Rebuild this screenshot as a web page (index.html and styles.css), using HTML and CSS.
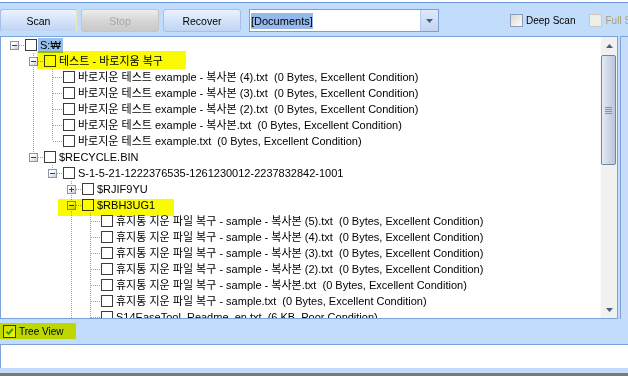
FILE: index.html
```html
<!DOCTYPE html>
<html lang="ko">
<head>
  <meta charset="UTF-8">
  <title>File Recovery</title>
  <link rel="stylesheet" href="styles.css">
</head>
<body>
<div class="app">
  <div class="topline"></div>

  <!-- Toolbar -->
  <div class="toolbar">
    <button class="btn scan">Scan</button>
    <button class="btn" disabled>Stop</button>
    <button class="btn recover">Recover</button>
    <div class="combo">
      <span class="combo-text"><span class="combo-sel">[Documents]</span></span>
      <span class="combo-arrow"><svg width="7" height="4" viewBox="0 0 7 4"><polygon points="0,0 7,0 3.5,4" fill="#4d5d83"/></svg></span>
    </div>
    <label class="chk deep"><span class="box13"></span>Deep Scan</label>
    <label class="chk full"><span class="box13"></span>Full Scan</label>
  </div>

  <div class="main">
    <div class="tree-panel">
      <div class="tree">
        <div class="row"><i class="g x"><b class="box"></b></i><span class="cb"></span><span class="lbl sel">S:₩</span></div>
        <div class="row"><i class="g"></i><i class="g x up dn"><b class="box"></b></i><span class="cb"></span><span class="lbl"><span class="ko">테스트</span> - <span class="ko">바로지움 복구</span></span><span class="hl hl-1"></span></div>
        <div class="row"><i class="g"></i><i class="g v"></i><i class="g t"></i><span class="cb"></span><span class="lbl"><span class="ko">바로지운 테스트</span> example - <span class="ko">복사본</span> (4).txt  (0 Bytes, Excellent Condition)</span></div>
        <div class="row"><i class="g"></i><i class="g v"></i><i class="g t"></i><span class="cb"></span><span class="lbl"><span class="ko">바로지운 테스트</span> example - <span class="ko">복사본</span> (3).txt  (0 Bytes, Excellent Condition)</span></div>
        <div class="row"><i class="g"></i><i class="g v"></i><i class="g t"></i><span class="cb"></span><span class="lbl"><span class="ko">바로지운 테스트</span> example - <span class="ko">복사본</span> (2).txt  (0 Bytes, Excellent Condition)</span></div>
        <div class="row"><i class="g"></i><i class="g v"></i><i class="g t"></i><span class="cb"></span><span class="lbl"><span class="ko">바로지운 테스트</span> example - <span class="ko">복사본</span>.txt  (0 Bytes, Excellent Condition)</span></div>
        <div class="row"><i class="g"></i><i class="g v"></i><i class="g l"></i><span class="cb"></span><span class="lbl"><span class="ko">바로지운 테스트</span> example.txt  (0 Bytes, Excellent Condition)</span></div>
        <div class="row"><i class="g"></i><i class="g x up"><b class="box"></b></i><span class="cb"></span><span class="lbl">$RECYCLE.BIN</span></div>
        <div class="row"><i class="g"></i><i class="g"></i><i class="g x up"><b class="box"></b></i><span class="cb"></span><span class="lbl">S-1-5-21-1222376535-1261230012-2237832842-1001</span></div>
        <div class="row"><i class="g"></i><i class="g"></i><i class="g"></i><i class="g x up dn"><b class="box plus"></b></i><span class="cb"></span><span class="lbl">$RJIF9YU</span></div>
        <div class="row"><i class="g"></i><i class="g"></i><i class="g"></i><i class="g x up dn"><b class="box"></b></i><span class="cb"></span><span class="lbl">$RBH3UG1</span><span class="hl hl-2"></span></div>
        <div class="row"><i class="g"></i><i class="g"></i><i class="g"></i><i class="g v"></i><i class="g t"></i><span class="cb"></span><span class="lbl"><span class="ko">휴지통 지운 파일 복구</span> - sample - <span class="ko">복사본</span> (5).txt  (0 Bytes, Excellent Condition)</span></div>
        <div class="row"><i class="g"></i><i class="g"></i><i class="g"></i><i class="g v"></i><i class="g t"></i><span class="cb"></span><span class="lbl"><span class="ko">휴지통 지운 파일 복구</span> - sample - <span class="ko">복사본</span> (4).txt  (0 Bytes, Excellent Condition)</span></div>
        <div class="row"><i class="g"></i><i class="g"></i><i class="g"></i><i class="g v"></i><i class="g t"></i><span class="cb"></span><span class="lbl"><span class="ko">휴지통 지운 파일 복구</span> - sample - <span class="ko">복사본</span> (3).txt  (0 Bytes, Excellent Condition)</span></div>
        <div class="row"><i class="g"></i><i class="g"></i><i class="g"></i><i class="g v"></i><i class="g t"></i><span class="cb"></span><span class="lbl"><span class="ko">휴지통 지운 파일 복구</span> - sample - <span class="ko">복사본</span> (2).txt  (0 Bytes, Excellent Condition)</span></div>
        <div class="row"><i class="g"></i><i class="g"></i><i class="g"></i><i class="g v"></i><i class="g t"></i><span class="cb"></span><span class="lbl"><span class="ko">휴지통 지운 파일 복구</span> - sample - <span class="ko">복사본</span>.txt  (0 Bytes, Excellent Condition)</span></div>
        <div class="row"><i class="g"></i><i class="g"></i><i class="g"></i><i class="g v"></i><i class="g t"></i><span class="cb"></span><span class="lbl"><span class="ko">휴지통 지운 파일 복구</span> - sample.txt  (0 Bytes, Excellent Condition)</span></div>
        <div class="row"><i class="g"></i><i class="g"></i><i class="g"></i><i class="g v"></i><i class="g t"></i><span class="cb"></span><span class="lbl">S14EaseTool_Readme_en.txt  (6 KB, Poor Condition)</span></div>
      </div>
      <div class="vscroll">
        <div class="sb-btn"><svg width="7" height="4" viewBox="0 0 7 4"><polygon points="0,4 3.5,0 7,4" fill="#4d5d83"/></svg></div>
        <div class="sb-track">
          <div class="sb-thumb"><span></span><span></span><span></span><span></span></div>
        </div>
        <div class="sb-btn"><svg width="7" height="4" viewBox="0 0 7 4"><polygon points="0,0 7,0 3.5,4" fill="#4d5d83"/></svg></div>
      </div>
    </div>
    <div class="side"></div>
  </div>

  <div class="options">
    <label class="chk tv"><span class="box13 on"><svg width="11" height="11" viewBox="0 0 11 11"><path d="M2.5 5.5 L4.5 7.8 L8.8 2.8" fill="none" stroke="#21a121" stroke-width="1.8"/></svg></span>Tree View</label>
    <span class="hl hl-tv"></span>
  </div>

  <div class="status"></div>
  <div class="bottom"></div>
</div>
</body>
</html>
```

FILE: styles.css
```css
body {
  margin: 0;
  width: 628px;
  height: 376px;
  overflow: hidden;
  background: #c2dcfc;
  font-family: "Liberation Sans", "Noto Sans CJK KR", sans-serif;
}

.app {
  display: flex;
  flex-direction: column;
  height: 376px;
}

.topline {
  height: 2px;
  background: #fff;
  border-bottom: 1px solid #6a98dc;
  flex: none;
}

/* Toolbar */
.toolbar {
  height: 33px;
  box-sizing: border-box;
  padding-top: 2px;
  display: flex;
  align-items: center;
  white-space: nowrap;
  overflow: hidden;
  flex: none;
}

.btn {
  width: 78px;
  height: 23px;
  margin-right: 4px;
  padding: 0;
  font: 10.5px "Liberation Sans", sans-serif;
  color: #000;
  border: 1px solid #a5bfe5;
  border-radius: 3px;
  background: linear-gradient(#ebf2fd, #d4e3f9 50%, #bfd5f4);
  flex: none;
}

.btn.scan {
  width: 77px;
  border-right-color: #efe6b4;
  border-bottom-color: #e8dca8;
}

.btn.recover {
  margin-right: 8px;
}

.btn:disabled {
  color: #a8a8a8;
  border-color: #c6c6c6;
  background: linear-gradient(#ededed, #d6d6d6 50%, #c9c9c9);
}

.combo {
  width: 190px;
  height: 23px;
  box-sizing: border-box;
  border: 1px solid #7f9fd4;
  background: #fff;
  display: flex;
  flex: none;
}

.combo-text {
  flex: 1;
  padding-left: 1px;
  display: flex;
  align-items: center;
  font-size: 11px;
}

.combo-sel {
  background: #95b9ec;
  padding: 1px 0;
  line-height: 14px;
}

.combo-arrow {
  width: 17px;
  border-left: 1px solid #b5c8ea;
  background: linear-gradient(#dfe9f9, #c2d5f3);
  display: flex;
  align-items: center;
  justify-content: center;
}

.chk {
  display: flex;
  align-items: center;
  gap: 3px;
  font-size: 10px;
  flex: none;
}

.chk.deep { margin-left: 71px; }

.chk.full {
  margin-left: 14px;
  color: #a89e7c;
}

.box13 {
  width: 13px;
  height: 13px;
  box-sizing: border-box;
  border: 1px solid #8e9cb5;
  background: linear-gradient(135deg, #d9d9d3, #fbfbfa);
  display: flex;
  align-items: center;
  justify-content: center;
}

.full .box13 {
  border-color: #c9c9c2;
  background: #efefea;
}

.box13.on {
  border-color: #1c5180;
}

/* Tree */
.main {
  display: flex;
  height: 283px;
  flex: none;
}

.tree-panel {
  width: 618px;
  box-sizing: border-box;
  border: 1px solid #7ea2dc;
  background: #fff;
  display: flex;
  overflow: hidden;
  flex: none;
}

.tree {
  flex: 1;
  padding-left: 4px;
  overflow: hidden;
}

.row {
  display: flex;
  align-items: center;
  height: 16px;
  position: relative;
  white-space: nowrap;
}

.g {
  display: block;
  width: 19px;
  height: 16px;
  position: relative;
  flex: none;
}

.v::before, .t::before, .l::before, .up::before {
  content: "";
  position: absolute;
  left: 9px;
  top: 0;
  width: 1px;
  height: 16px;
  background: linear-gradient(#a0a0a0 50%, transparent 50%) 0 0 / 1px 2px;
}

.l::before, .up::before { height: 8px; }
.up.dn::before { height: 16px; }

.t::after, .l::after, .x::after {
  content: "";
  position: absolute;
  left: 10px;
  top: 8px;
  width: 9px;
  height: 1px;
  background: linear-gradient(90deg, #a0a0a0 50%, transparent 50%) 0 0 / 2px 1px;
}

.x::after {
  left: 14px;
  width: 5px;
}

.box {
  position: absolute;
  left: 5px;
  top: 4px;
  width: 9px;
  height: 9px;
  box-sizing: border-box;
  border: 1px solid #8a96ab;
  background: linear-gradient(135deg, #fff 30%, #c4cbd8);
}

.box::before {
  content: "";
  position: absolute;
  left: 1px;
  top: 3px;
  width: 5px;
  height: 1px;
  background: #1c3f8c;
}

.box.plus::after {
  content: "";
  position: absolute;
  left: 3px;
  top: 1px;
  width: 1px;
  height: 5px;
  background: #1c3f8c;
}

.cb {
  width: 12px;
  height: 12px;
  box-sizing: border-box;
  border: 1px solid #3c3c3c;
  background: #fff;
  margin-left: 1px;
  flex: none;
}

.lbl {
  margin-left: 1px;
  padding: 0 2px;
  font-size: 11px;
  line-height: 15px;
  white-space: pre;
  color: #000;
}

.ko {
  font-family: "Noto Sans CJK KR", sans-serif;
  font-size: 11px;
}

.sel { background: #98c0ec; }

/* marker highlights drawn over the screenshot */
.hl {
  position: absolute;
  background: #fafa00;
  mix-blend-mode: multiply;
  pointer-events: none;
}

.hl-1 { left: 32px; top: -2px; width: 149px; height: 18px; }
.hl-2 { left: 53px; top: 2px; width: 116px; height: 17px; }
.hl-tv { left: 0; top: 4px; width: 76px; height: 16px; }

/* Scrollbar */
.vscroll {
  width: 17px;
  flex: none;
  display: flex;
  flex-direction: column;
  background: #f1f1ef;
  border-left: 1px solid #fafafa;
  box-sizing: border-box;
}

.sb-btn {
  height: 17px;
  display: flex;
  align-items: center;
  justify-content: center;
  flex: none;
}

.sb-track { flex: 1; }

.sb-thumb {
  margin: 1px 0 0 0;
  width: 15px;
  height: 110px;
  box-sizing: border-box;
  border: 1px solid #76849f;
  border-radius: 2px;
  background: linear-gradient(90deg, #e6ebf3, #cdd7e8 50%, #bac7dc);
  display: flex;
  flex-direction: column;
  align-items: center;
  justify-content: center;
  gap: 1px;
}

.sb-thumb span {
  width: 7px;
  height: 1px;
  background: #8391ad;
}

.side {
  margin-left: 2px;
  flex: 1;
  border-left: 1px solid #7ea2dc;
  border-top: 1px solid #7ea2dc;
  background: #c8ddfb;
}

/* Bottom */
.options {
  height: 25px;
  position: relative;
  display: flex;
  align-items: center;
  padding-left: 3px;
  flex: none;
}

.status {
  height: 24px;
  box-sizing: border-box;
  border-top: 1px solid #7ea2dc;
  border-left: 1px solid #7ea2dc;
  background: #fff;
  flex: none;
}

.bottom {
  flex: 1;
  border-bottom: 3px solid #7a7a7a;
}
```
